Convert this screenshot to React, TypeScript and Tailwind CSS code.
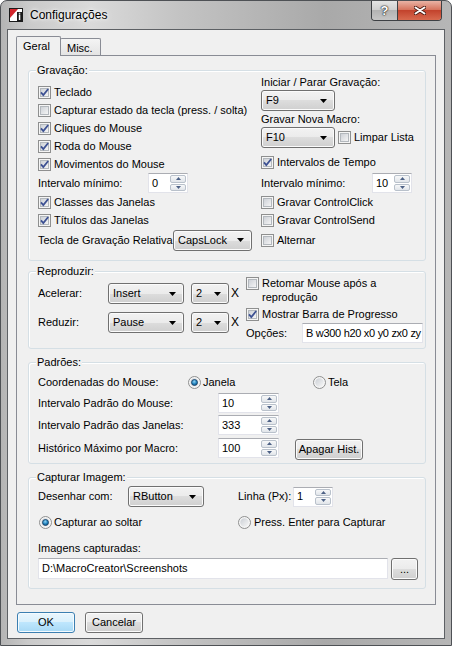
import { useId } from "react";

const face =
  "border-[#707070] bg-[linear-gradient(#f2f2f2,#ebebeb_50%,#dddddd_50%,#cfcfcf)] shadow-[inset_0_0_0_1px_#fbfbfb]";
const edit = "border border-[#e2e3ea] border-t-[#abadb3] bg-white";

function Arrow() {
  return (
    <svg width="7" height="4" viewBox="0 0 7 4">
      <path d="M0 0h7L3.5 4z" fill="#000" />
    </svg>
  );
}

function Combo({ value, w }: { value: string; w: string }) {
  return (
    <div
      className={`flex h-[21px] shrink-0 items-center justify-between rounded-[3px] border pl-[4px] pr-[7px] ${face} ${w}`}
    >
      <span>{value}</span>
      <Arrow />
    </div>
  );
}

function SpinBtn({ up }: { up?: boolean }) {
  return (
    <span className="flex flex-1 items-center justify-center rounded-[2px] border border-[#b9c1cb] bg-[linear-gradient(#f7f8f9,#e1e5ea)]">
      <svg width="5" height="3" viewBox="0 0 5 3">
        <path d={up ? "M0 3h5L2.5 0z" : "M0 0h5L2.5 3z"} fill="#4d6185" />
      </svg>
    </span>
  );
}

function Spin({ value, w }: { value: string; w: string }) {
  return (
    <div className={`flex h-[20px] shrink-0 ${edit} ${w}`}>
      <span className="flex flex-1 items-center pl-[3px]">{value}</span>
      <div className="flex w-[17px] flex-col gap-px py-px pr-px">
        <SpinBtn up />
        <SpinBtn />
      </div>
    </div>
  );
}

function Check({ checked }: { checked?: boolean }) {
  const id = useId();
  return (
    <svg width="13" height="13" viewBox="0 0 13 13" className="shrink-0">
      <defs>
        <linearGradient id={id} x1="0" y1="0" x2="1" y2="1">
          <stop offset="0" stopColor="#cbcfd5" />
          <stop offset="1" stopColor="#f7f7f7" />
        </linearGradient>
      </defs>
      <rect x="0.5" y="0.5" width="12" height="12" fill="#f5f5f5" stroke="#8e8f8f" />
      <rect x="2.5" y="2.5" width="8" height="8" fill={`url(#${id})`} stroke="#b3b8bd" />
      {checked && (
        <path d="M3 6.4 L5.3 9 L10.2 3" fill="none" stroke="#3d5193" strokeWidth="1.8" />
      )}
    </svg>
  );
}

function Radio({ checked }: { checked?: boolean }) {
  const id = useId();
  return (
    <svg width="13" height="13" viewBox="0 0 13 13" className="shrink-0">
      <defs>
        <linearGradient id={`${id}a`} x1="0" y1="0" x2="1" y2="1">
          <stop offset="0" stopColor="#cbcfd5" />
          <stop offset="1" stopColor="#f7f7f7" />
        </linearGradient>
        <radialGradient id={`${id}b`} cx="0.45" cy="0.35" r="0.7">
          <stop offset="0" stopColor="#8fd3f5" />
          <stop offset="0.6" stopColor="#1a7cb8" />
          <stop offset="1" stopColor="#0c4a7a" />
        </radialGradient>
      </defs>
      <circle cx="6.5" cy="6.5" r="6" fill="#f5f5f5" stroke="#8e8f8f" />
      <circle cx="6.5" cy="6.5" r="4.2" fill={`url(#${id}a)`} />
      {checked && <circle cx="6.5" cy="6.5" r="3" fill={`url(#${id}b)`} stroke="#1c3f62" strokeWidth="0.8" />}
    </svg>
  );
}

function CheckRow({ label, checked }: { label: string; checked?: boolean }) {
  return (
    <div className="flex h-[18px] items-center gap-[3px]">
      <Check checked={checked} />
      <span className="whitespace-nowrap">{label}</span>
    </div>
  );
}

function Btn({ children, w, h, def }: { children: React.ReactNode; w: string; h: string; def?: boolean }) {
  return (
    <div
      className={`flex shrink-0 items-center justify-center rounded-[3px] border ${
        def
          ? "border-[#3c7fb1] bg-[linear-gradient(#eaf6fd,#d9f0fc_50%,#bee6fd_50%,#a7d9f5)] shadow-[inset_0_0_0_1px_#f4fbff]"
          : face
      } ${w} ${h}`}
    >
      {children}
    </div>
  );
}

function Group({ title, cls, children }: { title: string; cls: string; children: React.ReactNode }) {
  return (
    <div className={`relative ml-[11px] w-[398px] shrink-0 rounded-[3px] border border-[#d5dfe5] shadow-[inset_1px_1px_0_#fff] ${cls}`}>
      <span className="absolute -top-[7px] left-[7px] bg-[#f0f0f0] px-px leading-[13px]">{title}</span>
      {children}
    </div>
  );
}

function SpinRow({ label, value, cls }: { label: string; value: string; cls: string }) {
  return (
    <div className={`flex h-[20px] items-center ${cls}`}>
      <span className="w-[180px]">{label}</span>
      <Spin value={value} w="w-[61px]" />
    </div>
  );
}

function TitleBar() {
  return (
    <div className="flex h-[28px] shrink-0 items-center pl-[8px]">
      <svg width="14" height="14" viewBox="0 0 14 14" className="shrink-0">
        <rect x="0.5" y="0.5" width="13" height="13" fill="#fff" stroke="#1b1b1b" />
        <path d="M1 1h8L1 10z" fill="#d3262c" />
        <rect x="8" y="4" width="5" height="9" fill="#1b1b1b" />
        <rect x="9.8" y="6.5" width="1.5" height="5.5" fill="#fff" />
        <rect x="9.8" y="4.8" width="1.5" height="1" fill="#fff" />
      </svg>
      <span className="ml-[7px] text-[12px] [text-shadow:0_0_6px_#fff,0_0_3px_#fff]">Configurações</span>
      <div className="ml-auto mr-[9px] flex h-[20px] self-start overflow-hidden rounded-b-[4px] border border-t-0 border-[#3d4044]">
        <div className="flex w-[26px] items-center justify-center border-r border-[#3d4044] bg-[linear-gradient(#e4e4e4,#d0d0d0_45%,#b3b3b3_50%,#c6c6c6)] text-[13px] font-bold text-white [text-shadow:0_0_1px_#222,0_0_1px_#222,0_0_2px_#333]">
          ?
        </div>
        <div className="flex w-[43px] items-center justify-center bg-[linear-gradient(#e9b3a5,#d6755f_45%,#c3432d_50%,#d86a4f)]">
          <svg width="12" height="9" viewBox="0 0 12 9">
            <path d="M1.5 1.5L10.5 7.5M10.5 1.5L1.5 7.5" stroke="#4a1a12" strokeWidth="3.6" strokeLinecap="round" />
            <path d="M1.5 1.5L10.5 7.5M10.5 1.5L1.5 7.5" stroke="#fff" strokeWidth="2" strokeLinecap="round" />
          </svg>
        </div>
      </div>
    </div>
  );
}

export default function App() {
  return (
    <div className="flex h-[646px] w-[452px] flex-col overflow-hidden rounded-t-[7px] border border-[#4e5155] bg-[linear-gradient(90deg,#b4b4b4,#cacaca_6%,#dadada_20%,#c3c3c3_40%,#a9a9a9_72%,#b6b6b6)] font-['Liberation_Sans',Arial,sans-serif] text-[11px] leading-[13px] text-black">
      <TitleBar />
      <div className="mx-[6px] flex h-[610px] flex-col border border-[#5d6064] bg-[#f0f0f0]">
        <div className="ml-[8px] mt-[6px] flex h-[19px] items-end">
          <div className="relative z-10 -mb-px h-[20px] w-[45px] rounded-t-[2px] border border-b-0 border-[#898c95] bg-[#f0f0f0] pl-[6px] pt-[3px]">
            Geral
          </div>
          <div className="-ml-px h-[17px] w-[41px] rounded-t-[2px] border border-b-0 border-[#898c95] bg-[linear-gradient(#f4f4f4,#e4e4e4)] pl-[6px] pt-[3px]">
            Misc.
          </div>
        </div>

        <div className="ml-[8px] flex h-[550px] w-[420px] flex-col border border-[#898c95]">
          <Group title="Gravação:" cls="mt-[14px] h-[191px]">
            <div className="flex">
              <div className="w-[232px] pl-[9px] pt-[12px]">
                <CheckRow checked label="Teclado" />
                <CheckRow label="Capturar estado da tecla (press. / solta)" />
                <CheckRow checked label="Cliques do Mouse" />
                <CheckRow checked label="Roda do Mouse" />
                <CheckRow checked label="Movimentos do Mouse" />
                <div className="flex h-[20px] items-center">
                  <span className="w-[110px]">Intervalo mínimo:</span>
                  <Spin value="0" w="w-[40px]" />
                </div>
                <CheckRow checked label="Classes das Janelas" />
                <CheckRow checked label="Títulos das Janelas" />
                <div className="flex h-[22px] items-center">
                  <span className="w-[135px] whitespace-nowrap">Tecla de Gravação Relativa</span>
                  <Combo value="CapsLock" w="w-[79px]" />
                </div>
              </div>
              <div className="flex-1 pt-[3px]">
                <div className="flex h-[16px] items-center">Iniciar / Parar Gravação:</div>
                <Combo value="F9" w="w-[74px]" />
                <div className="flex h-[16px] items-center">Gravar Nova Macro:</div>
                <div className="flex h-[21px] items-center gap-[3px]">
                  <Combo value="F10" w="w-[74px]" />
                  <Check />
                  <span>Limpar Lista</span>
                </div>
                <div className="mt-[5px]">
                  <CheckRow checked label="Intervalos de Tempo" />
                </div>
                <div className="mt-[2px] flex h-[20px] items-center">
                  <span className="w-[111px]">Intervalo mínimo:</span>
                  <Spin value="10" w="w-[40px]" />
                </div>
                <CheckRow label="Gravar ControlClick" />
                <CheckRow label="Gravar ControlSend" />
                <div className="flex h-[22px] items-center gap-[3px]">
                  <Check />
                  <span>Alternar</span>
                </div>
              </div>
            </div>
          </Group>

          <Group title="Reproduzir:" cls="mt-[10px] h-[78px]">
            <div className="flex">
              <div className="w-[217px] pl-[9px] pt-[11px]">
                <div className="flex h-[21px] items-center">
                  <span className="w-[70px]">Acelerar:</span>
                  <Combo value="Insert" w="w-[76px]" />
                  <div className="ml-[7px]">
                    <Combo value="2" w="w-[38px]" />
                  </div>
                  <span className="ml-[2px] text-[12px]">X</span>
                </div>
                <div className="mt-[8px] flex h-[21px] items-center">
                  <span className="w-[70px]">Reduzir:</span>
                  <Combo value="Pause" w="w-[76px]" />
                  <div className="ml-[7px]">
                    <Combo value="2" w="w-[38px]" />
                  </div>
                  <span className="ml-[2px] text-[12px]">X</span>
                </div>
              </div>
              <div className="flex-1 pt-[4px]">
                <div className="flex h-[28px] gap-[3px]">
                  <span className="mt-px">
                    <Check />
                  </span>
                  <span className="leading-[14px]">
                    Retomar Mouse após a
                    <br />
                    reprodução
                  </span>
                </div>
                <div className="mt-px">
                  <CheckRow checked label="Mostrar Barra de Progresso" />
                </div>
                <div className="flex h-[20px] items-center">
                  <span className="w-[56px]">Opções:</span>
                  <div className={`flex h-[20px] w-[121px] items-center overflow-hidden whitespace-nowrap pl-[3px] tracking-[-0.3px] ${edit}`}>
                    B w300 h20 x0 y0 zx0 zy
                  </div>
                </div>
              </div>
            </div>
          </Group>

          <Group title="Padrões:" cls="mt-[13px] h-[102px]">
            <div className="pl-[9px] pt-[10px]">
              <div className="flex h-[18px] items-center">
                <span className="w-[150px]">Coordenadas do Mouse:</span>
                <div className="flex w-[125px] items-center gap-[2px]">
                  <Radio checked />
                  <span>Janela</span>
                </div>
                <div className="flex items-center gap-[2px]">
                  <Radio />
                  <span>Tela</span>
                </div>
              </div>
              <SpinRow cls="mt-[2px]" label="Intervalo Padrão do Mouse:" value="10" />
              <SpinRow cls="mt-[2px]" label="Intervalo Padrão das Janelas:" value="333" />
              <div className="mt-[3px] flex h-[21px] items-start">
                <span className="flex h-[20px] w-[180px] items-center">Histórico Máximo por Macro:</span>
                <Spin value="100" w="w-[61px]" />
                <div className="ml-[16px] mt-px">
                  <Btn w="w-[68px]" h="h-[21px]">
                    Apagar Hist.
                  </Btn>
                </div>
              </div>
            </div>
          </Group>

          <Group title="Capturar Imagem:" cls="mt-[13px] h-[112px]">
            <div className="pl-[9px] pt-[8px]">
              <div className="flex h-[21px] items-center">
                <span className="w-[90px]">Desenhar com:</span>
                <Combo value="RButton" w="w-[76px]" />
                <span className="ml-[34px] w-[55px]">Linha (Px):</span>
                <Spin value="1" w="w-[40px]" />
              </div>
              <div className="mt-[6px] flex h-[18px] items-center">
                <div className="flex w-[200px] items-center gap-[2px] pl-px">
                  <Radio checked />
                  <span>Capturar ao soltar</span>
                </div>
                <div className="flex items-center gap-[3px]">
                  <Radio />
                  <span>Press. Enter para Capturar</span>
                </div>
              </div>
              <div className="mt-[9px] flex h-[16px] items-center">Imagens capturadas:</div>
              <div className="mt-[2px] flex items-start">
                <div className={`flex h-[21px] w-[350px] items-center overflow-hidden whitespace-nowrap pl-[3px] ${edit}`}>
                  {"D:\\MacroCreator\\Screenshots"}
                </div>
                <div className="ml-[3px]">
                  <Btn w="w-[27px]" h="h-[22px]">
                    ...
                  </Btn>
                </div>
              </div>
            </div>
          </Group>
        </div>

        <div className="ml-[9px] mt-[7px] flex gap-[10px]">
          <Btn def w="w-[58px]" h="h-[21px]">
            OK
          </Btn>
          <Btn w="w-[58px]" h="h-[21px]">
            Cancelar
          </Btn>
        </div>
      </div>
    </div>
  );
}
